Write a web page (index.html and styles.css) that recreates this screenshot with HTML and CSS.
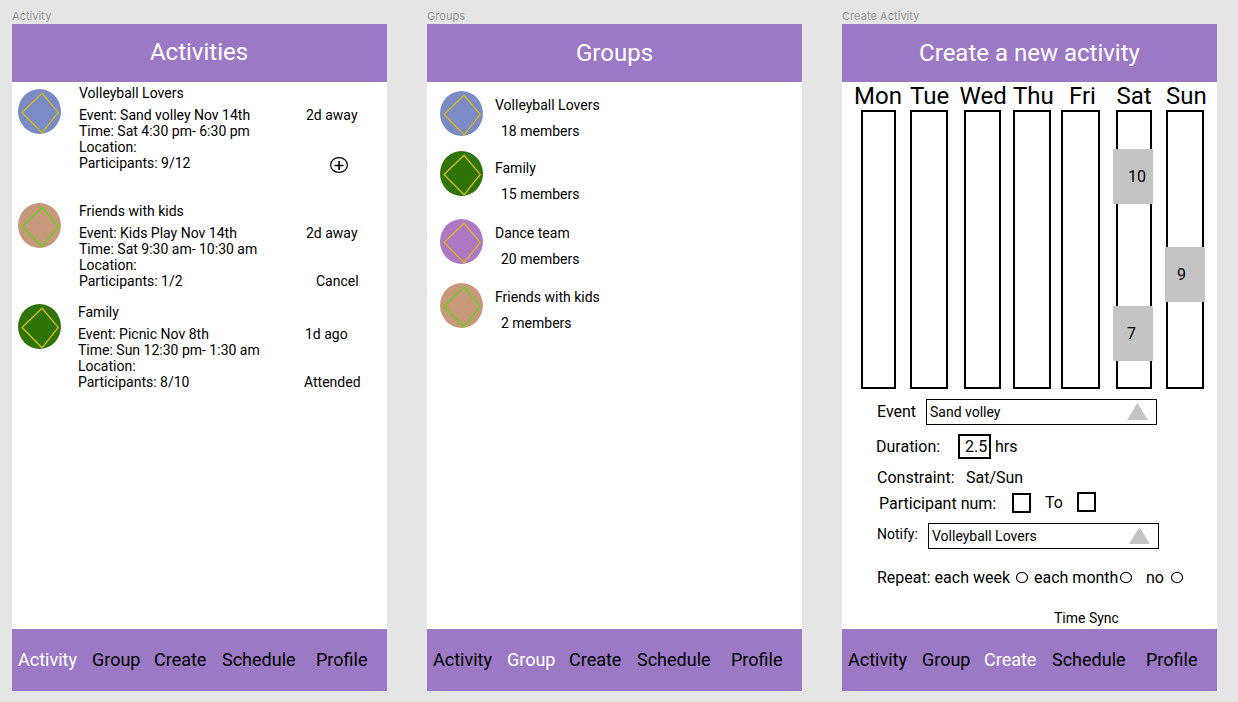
FILE: index.html
```
<!DOCTYPE html>
<html lang="en">
<head>
<meta charset="utf-8">
<title>Activity planner</title>
<link rel="stylesheet" href="styles.css">
</head>
<body>
<svg width="0" height="0" class="defs">
  <symbol id="avatar" viewBox="0 0 43 45">
    <ellipse cx="21.5" cy="22.5" rx="21.5" ry="22.5" fill="currentColor"/>
    <path d="M24 4.2 40.2 23.4 24 43.8 4 23.4Z" fill="none" stroke="var(--line)" stroke-width="1.35"/>
  </symbol>
</svg>
<main class="board">
  <section class="frame">
    <div class="frame-label">Activity</div>
    <div class="screen">
      <header class="header title-high">Activities</header>
      <div class="content activities">
        <article class="activity first">
          <svg class="avatar blue"><use href="#avatar"/></svg>
          <div class="info">
            <div class="name">Volleyball Lovers</div>
            <div>Event: Sand volley Nov 14th</div>
            <div>Time: Sat 4:30 pm- 6:30 pm</div>
            <div>Location:</div>
            <div>Participants: 9/12</div>
          </div>
          <div class="status">
            <div>2d away</div>
            <svg class="add" viewBox="0 0 18 16"><ellipse cx="9" cy="8" rx="8.4" ry="7.4"/><path d="M4.5 8.5h9M9.1 4v9"/></svg>
          </div>
        </article>
        <article class="activity second">
          <svg class="avatar tan"><use href="#avatar"/></svg>
          <div class="info">
            <div class="name">Friends with kids</div>
            <div>Event: Kids Play Nov 14th</div>
            <div>Time: Sat 9:30 am- 10:30 am</div>
            <div>Location:</div>
            <div>Participants: 1/2</div>
          </div>
          <div class="status">
            <div>2d away</div>
            <div class="cancel">Cancel</div>
          </div>
        </article>
        <article class="activity third">
          <svg class="avatar green"><use href="#avatar"/></svg>
          <div class="info">
            <div class="name">Family</div>
            <div>Event: Picnic Nov 8th</div>
            <div>Time: Sun 12:30 pm- 1:30 am</div>
            <div>Location:</div>
            <div>Participants: 8/10</div>
          </div>
          <div class="status">
            <div>1d ago</div>
            <div class="attended">Attended</div>
          </div>
        </article>
      </div>
      <nav class="nav"><span class="active">Activity</span><span>Group</span><span>Create</span><span>Schedule</span><span>Profile</span></nav>
    </div>
  </section>

  <section class="frame">
    <div class="frame-label">Groups</div>
    <div class="screen">
      <header class="header">Groups</header>
      <div class="content groups">
        <article class="group">
          <svg class="avatar blue"><use href="#avatar"/></svg>
          <div class="group-text"><div>Volleyball Lovers</div><div class="members">18 members</div></div>
        </article>
        <article class="group family">
          <svg class="avatar green"><use href="#avatar"/></svg>
          <div class="group-text"><div>Family</div><div class="members">15 members</div></div>
        </article>
        <article class="group dance">
          <svg class="avatar violet"><use href="#avatar"/></svg>
          <div class="group-text"><div>Dance team</div><div class="members">20 members</div></div>
        </article>
        <article class="group kids">
          <svg class="avatar tan"><use href="#avatar"/></svg>
          <div class="group-text"><div>Friends with kids</div><div class="members">2 members</div></div>
        </article>
      </div>
      <nav class="nav"><span>Activity</span><span class="active">Group</span><span>Create</span><span>Schedule</span><span>Profile</span></nav>
    </div>
  </section>

  <section class="frame">
    <div class="frame-label">Create Activity</div>
    <div class="screen">
      <header class="header">Create a new activity</header>
      <div class="content">
        <div class="week">
          <div class="day mon"><span>Mon</span><div class="bar"></div></div>
          <div class="day tue"><span>Tue</span><div class="bar"></div></div>
          <div class="day wed"><span>Wed</span><div class="bar"></div></div>
          <div class="day thu"><span>Thu</span><div class="bar"></div></div>
          <div class="day fri"><span>Fri</span><div class="bar"></div></div>
          <div class="day sat"><span>Sat</span><div class="bar"><div class="slot ten">10</div><div class="slot seven">7</div></div></div>
          <div class="day sun"><span>Sun</span><div class="bar"><div class="slot nine">9</div></div></div>
        </div>
        <form class="form">
          <div class="row event">
            <label>Event</label>
            <div class="select">Sand volley<svg viewBox="0 0 21 17"><path d="M10.5 0 21 17H0Z"/></svg></div>
          </div>
          <div class="row duration"><label>Duration:</label><div class="number">2.5</div><span>hrs</span></div>
          <div class="row constraint"><label>Constraint:</label><span>Sat/Sun</span></div>
          <div class="row participants"><label>Participant num:</label><div class="box"></div><span>To</span><div class="box"></div></div>
          <div class="row notify">
            <label>Notify:</label>
            <div class="select">Volleyball Lovers<svg viewBox="0 0 21 17"><path d="M10.5 0 21 17H0Z"/></svg></div>
          </div>
          <div class="row repeat">
            <span class="week-label">Repeat: each week</span><svg class="radio" viewBox="0 0 12 11"><ellipse cx="6" cy="5.5" rx="5.5" ry="5"/></svg>
            <span class="month-label">each month</span><svg class="radio" viewBox="0 0 12 11"><ellipse cx="6" cy="5.5" rx="5.5" ry="5"/></svg>
            <span class="no-label">no</span><svg class="radio" viewBox="0 0 12 11"><ellipse cx="6" cy="5.5" rx="5.5" ry="5"/></svg>
          </div>
          <div class="sync">Time Sync</div>
        </form>
      </div>
      <nav class="nav"><span>Activity</span><span>Group</span><span class="active">Create</span><span>Schedule</span><span>Profile</span></nav>
    </div>
  </section>
</main>
</body>
</html>
```
FILE: styles.css
```
* { box-sizing: border-box; }
body {
  margin: 0;
  height: 702px;
  overflow: hidden;
  background: #e5e5e5;
  color: #000;
  font: 14px/16px Roboto, sans-serif;
  white-space: nowrap;
}
.defs { position: absolute; }
.board { display: flex; gap: 40px; padding: 9px 12px 0; }
.frame { flex: none; width: 375px; }
.frame-label { height: 15px; color: #999; font: 11px/15px Inter, sans-serif; letter-spacing: 0.05px; }
.screen { display: flex; flex-direction: column; height: 667px; background: #fff; }
.header {
  height: 58px;
  background: #9b79c4;
  color: #fff;
  font-size: 24px;
  line-height: 58px;
  text-align: center;
}
.title-high { padding-right: 1px; line-height: 56px; }
.content { flex: 1; min-height: 0; }
.nav {
  display: grid;
  grid-template-columns: 74px 62px 68px 94px 1fr;
  height: 62px;
  padding-left: 6px;
  background: #9b79c4;
  font-size: 18px;
  line-height: 62px;
}
.nav .active { color: #fff; }

.avatar { flex: none; width: 43px; height: 45px; }
.blue { color: #7b8bc5; --line: #d4b91c; }
.green { color: #307408; --line: #d4b91c; }
.violet { color: #ae78c5; --line: #d4b91c; }
.tan { color: #c7997b; --line: #65d01e; }

.activities { padding: 3px 0 0 6px; }
.activity { display: grid; grid-template-columns: 61px 227px 1fr; height: 86px; }
.first .avatar { margin-top: 4px; }
.second { margin-top: 32px; }
.third { margin-top: 15px; grid-template-columns: 60px 227px 1fr; }
.name { margin-bottom: 6px; }
.status { display: flex; flex-direction: column; justify-content: space-between; padding-top: 22px; }
.cancel { margin-left: 10px; }
.attended { margin-left: -1px; }
.add { width: 18px; height: 16px; margin: 0 0 -2px 24px; fill: none; stroke: #000; stroke-width: 1.2; }
.add path { stroke-width: 1.6; }

.groups { padding: 9px 0 0 13px; }
.group { display: flex; gap: 12px; }
.group-text { display: grid; row-gap: 10px; padding-top: 6px; }
.members { padding-left: 6px; }
.family { margin-top: 12px; }
.family .group-text { padding-top: 9px; }
.dance { margin-top: 17px; }
.kids { margin-top: 16px; }

.week { display: flex; padding-left: 19px; }
.day span { display: block; height: 28px; font-size: 24px; line-height: 28px; }
.bar { position: relative; height: 279px; border: 2px solid #000; }
.mon { width: 35px; }
.tue { width: 38px; margin-left: 14px; }
.wed { width: 37px; margin-left: 16px; }
.thu { width: 38px; margin-left: 12px; }
.fri { width: 39px; margin-left: 10px; }
.sat { width: 36px; margin-left: 16px; }
.sun { width: 38px; margin-left: 14px; }
.mon span { margin-left: -7px; }
.wed span { margin-left: -4.5px; }
.fri span { margin-left: 8px; }
.sat span { margin-left: 0.5px; }
.slot {
  position: absolute;
  width: 40px;
  height: 55px;
  background: #c4c4c4;
  font-size: 16px;
  line-height: 55px;
}
.ten { left: -5px; top: 37px; padding-left: 15px; }
.seven { left: -5px; top: 194px; padding-left: 14px; }
.nine { left: -3px; top: 135px; padding-left: 12px; }

.form { padding: 10px 0 0 35px; font-size: 16px; }
.row { display: flex; align-items: center; }
.select {
  display: flex;
  align-items: center;
  justify-content: space-between;
  width: 231px;
  height: 26px;
  padding: 0 8px 0 3px;
  border: 1px solid #000;
  font-size: 14px;
}
.select svg { width: 21px; height: 17px; margin-bottom: 1px; fill: #c4c4c4; }
.event label { width: 49px; }
.duration { height: 25px; margin: 9px 0 0 -1px; }
.duration label { width: 82px; }
.number { width: 33px; height: 25px; margin-right: 4px; padding-left: 5px; border: 2px solid #000; line-height: 21px; }
.constraint { height: 18px; margin-top: 10px; }
.constraint label { width: 89px; }
.participants { height: 21px; margin: 5px 0 0 2px; align-items: flex-start; line-height: 21px; }
.participants label { width: 133px; padding-top: 1px; }
.participants span { width: 46px; padding-left: 14px; }
.box { width: 19px; height: 20px; border: 2px solid #000; }
.participants label + .box { margin-top: 1px; }
.notify { margin-top: 10px; }
.notify label { width: 51px; margin-bottom: 4px; font-size: 14px; }
.repeat { height: 18px; margin-top: 20px; }
.radio { width: 12px; height: 11px; margin-bottom: 1px; fill: none; stroke: #000; stroke-width: 1.1; }
.week-label { width: 139px; }
.month-label { width: 86px; margin-left: 6px; }
.no-label { width: 25px; margin-left: 14px; }
.sync { margin: 23px 0 0 177px; font-size: 14px; }
```
